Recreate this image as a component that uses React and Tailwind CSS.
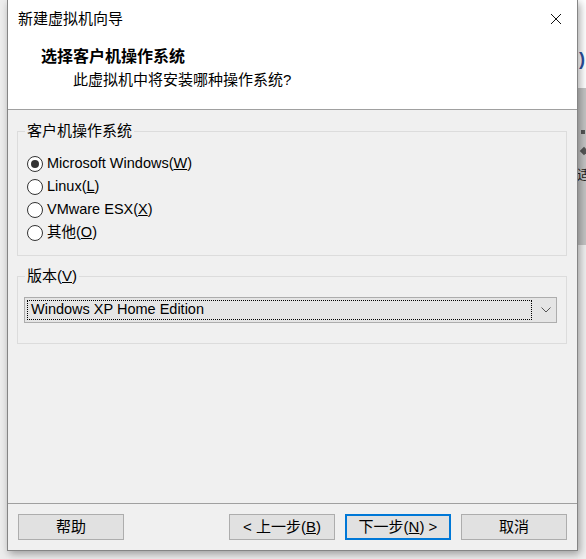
import React from "react";

const FONT = "[font-family:'Liberation_Sans','Noto_Sans_CJK_SC',sans-serif]";

function Radio({ checked, children }) {
  return (
    <div className="flex items-center h-[23px]">
      <span className="w-[16px] h-[16px] rounded-full border border-[#333333] bg-white flex items-center justify-center">
        {checked && <span className="w-[8px] h-[8px] rounded-full bg-[#333333]" />}
      </span>
      <span className="ml-[4px] text-[14.5px] text-black">{children}</span>
    </div>
  );
}

function GroupBox({ label, className, children }) {
  return (
    <div className={"relative mx-[9px] mr-[10px] border border-[#dcdcdc] " + className}>
      <span className="absolute left-[7px] top-[-11px] px-[2px] bg-[#f0f0f0] text-[15px] leading-[20px] text-black">
        {label}
      </span>
      {children}
    </div>
  );
}

function Btn({ focused, children }) {
  return (
    <button
      type="button"
      className={
        "w-[106px] h-[26px] bg-[#e1e1e1] text-[15px] text-black flex items-center justify-center " +
        (focused ? "border-2 border-[#0078d7]" : "border border-[#adadad]")
      }
    >
      {children}
    </button>
  );
}

export default function App() {
  return (
    <div className={"w-[586px] h-[559px] overflow-hidden bg-[#eeeeee] flex " + FONT}>
      {/* desktop edge on the left */}
      <div className="w-[7px] shrink-0 bg-[#ededed]" />

      {/* wizard window */}
      <div className="w-[571px] h-[551px] shrink-0 flex flex-col bg-[#f0f0f0] border-x border-b border-[#858585] shadow-[2px_3px_8px_rgba(0,0,0,0.35)] relative z-10">
        {/* title bar */}
        <div className="h-[38px] bg-white flex items-center justify-between pl-[10px] pr-[15px]">
          <span className="text-[15px] text-black">新建虚拟机向导</span>
          <svg width="12" height="12" viewBox="0 0 12 12">
            <path d="M1 1 L11 11 M11 1 L1 11" stroke="#111" strokeWidth="1" fill="none" />
          </svg>
        </div>

        {/* header */}
        <div className="h-[71px] bg-white flex flex-col">
          <div className="pl-[33px] pt-[8px] text-[16px] font-bold leading-[22px] text-black">选择客户机操作系统</div>
          <div className="pl-[65px] pt-[1px] text-[15px] leading-[22px] text-black">此虚拟机中将安装哪种操作系统?</div>
        </div>
        <div className="h-px bg-[#a0a0a0]" />

        {/* body */}
        <div className="flex-1 flex flex-col">
          <GroupBox label="客户机操作系统" className="mt-[21px] h-[125px] pt-[20px] pl-[9px]">
            <Radio checked>
              Microsoft Windows(<span className="underline">W</span>)
            </Radio>
            <Radio>
              Linux(<span className="underline">L</span>)
            </Radio>
            <Radio>
              VMware ESX(<span className="underline">X</span>)
            </Radio>
            <Radio>
              其他(<span className="underline">O</span>)
            </Radio>
          </GroupBox>

          <GroupBox
            label={
              <>
                版本(<span className="underline">V</span>)
              </>
            }
            className="mt-[20px] h-[68px] pt-[20px] pl-[6px] pr-[9px]"
          >
            <div className="h-[26px] border border-[#adadad] bg-[#e5e5e5] flex items-center pl-[2px] pr-[5px]">
              <div className="flex-1 h-[20px] border border-dotted border-black flex items-center pl-[3px] text-[14.5px] text-black">
                Windows XP Home Edition
              </div>
              <svg className="ml-[9px]" width="10" height="6" viewBox="0 0 10 6">
                <path d="M0.5 0.5 L5 5 L9.5 0.5" stroke="#555" strokeWidth="1" fill="none" />
              </svg>
            </div>
          </GroupBox>
        </div>

        {/* footer */}
        <div className="h-px bg-[#a0a0a0]" />
        <div className="h-[46px] pt-[10px] px-[10px] flex gap-[10px]">
          <Btn>帮助</Btn>
          <div className="flex-1" />
          <Btn>
            &lt; 上一步(<span className="underline">B</span>)
          </Btn>
          <Btn focused>
            下一步(<span className="underline">N</span>) &gt;
          </Btn>
          <Btn>取消</Btn>
        </div>
      </div>

      {/* desktop edge on the right */}
      <div className="flex-1 flex flex-col">
        <div className="h-[88px] bg-white pt-[48px] pl-[1px]">
          <span className="text-[18px] font-bold text-[#2a4f9e] leading-none">)</span>
        </div>
        <div className="h-[157px] bg-[#c4c4c4] flex flex-col pl-[3px] pt-[42px] gap-[14px]">
          <span className="w-[4px] h-[4px] bg-[#555]" />
          <span className="w-[6px] h-[6px] bg-[#555] rotate-45" />
          <span className="text-[13px] text-[#222] leading-none -ml-[4px]">适</span>
        </div>
        <div className="flex-1 bg-[#f0f0f0]" />
      </div>
    </div>
  );
}
